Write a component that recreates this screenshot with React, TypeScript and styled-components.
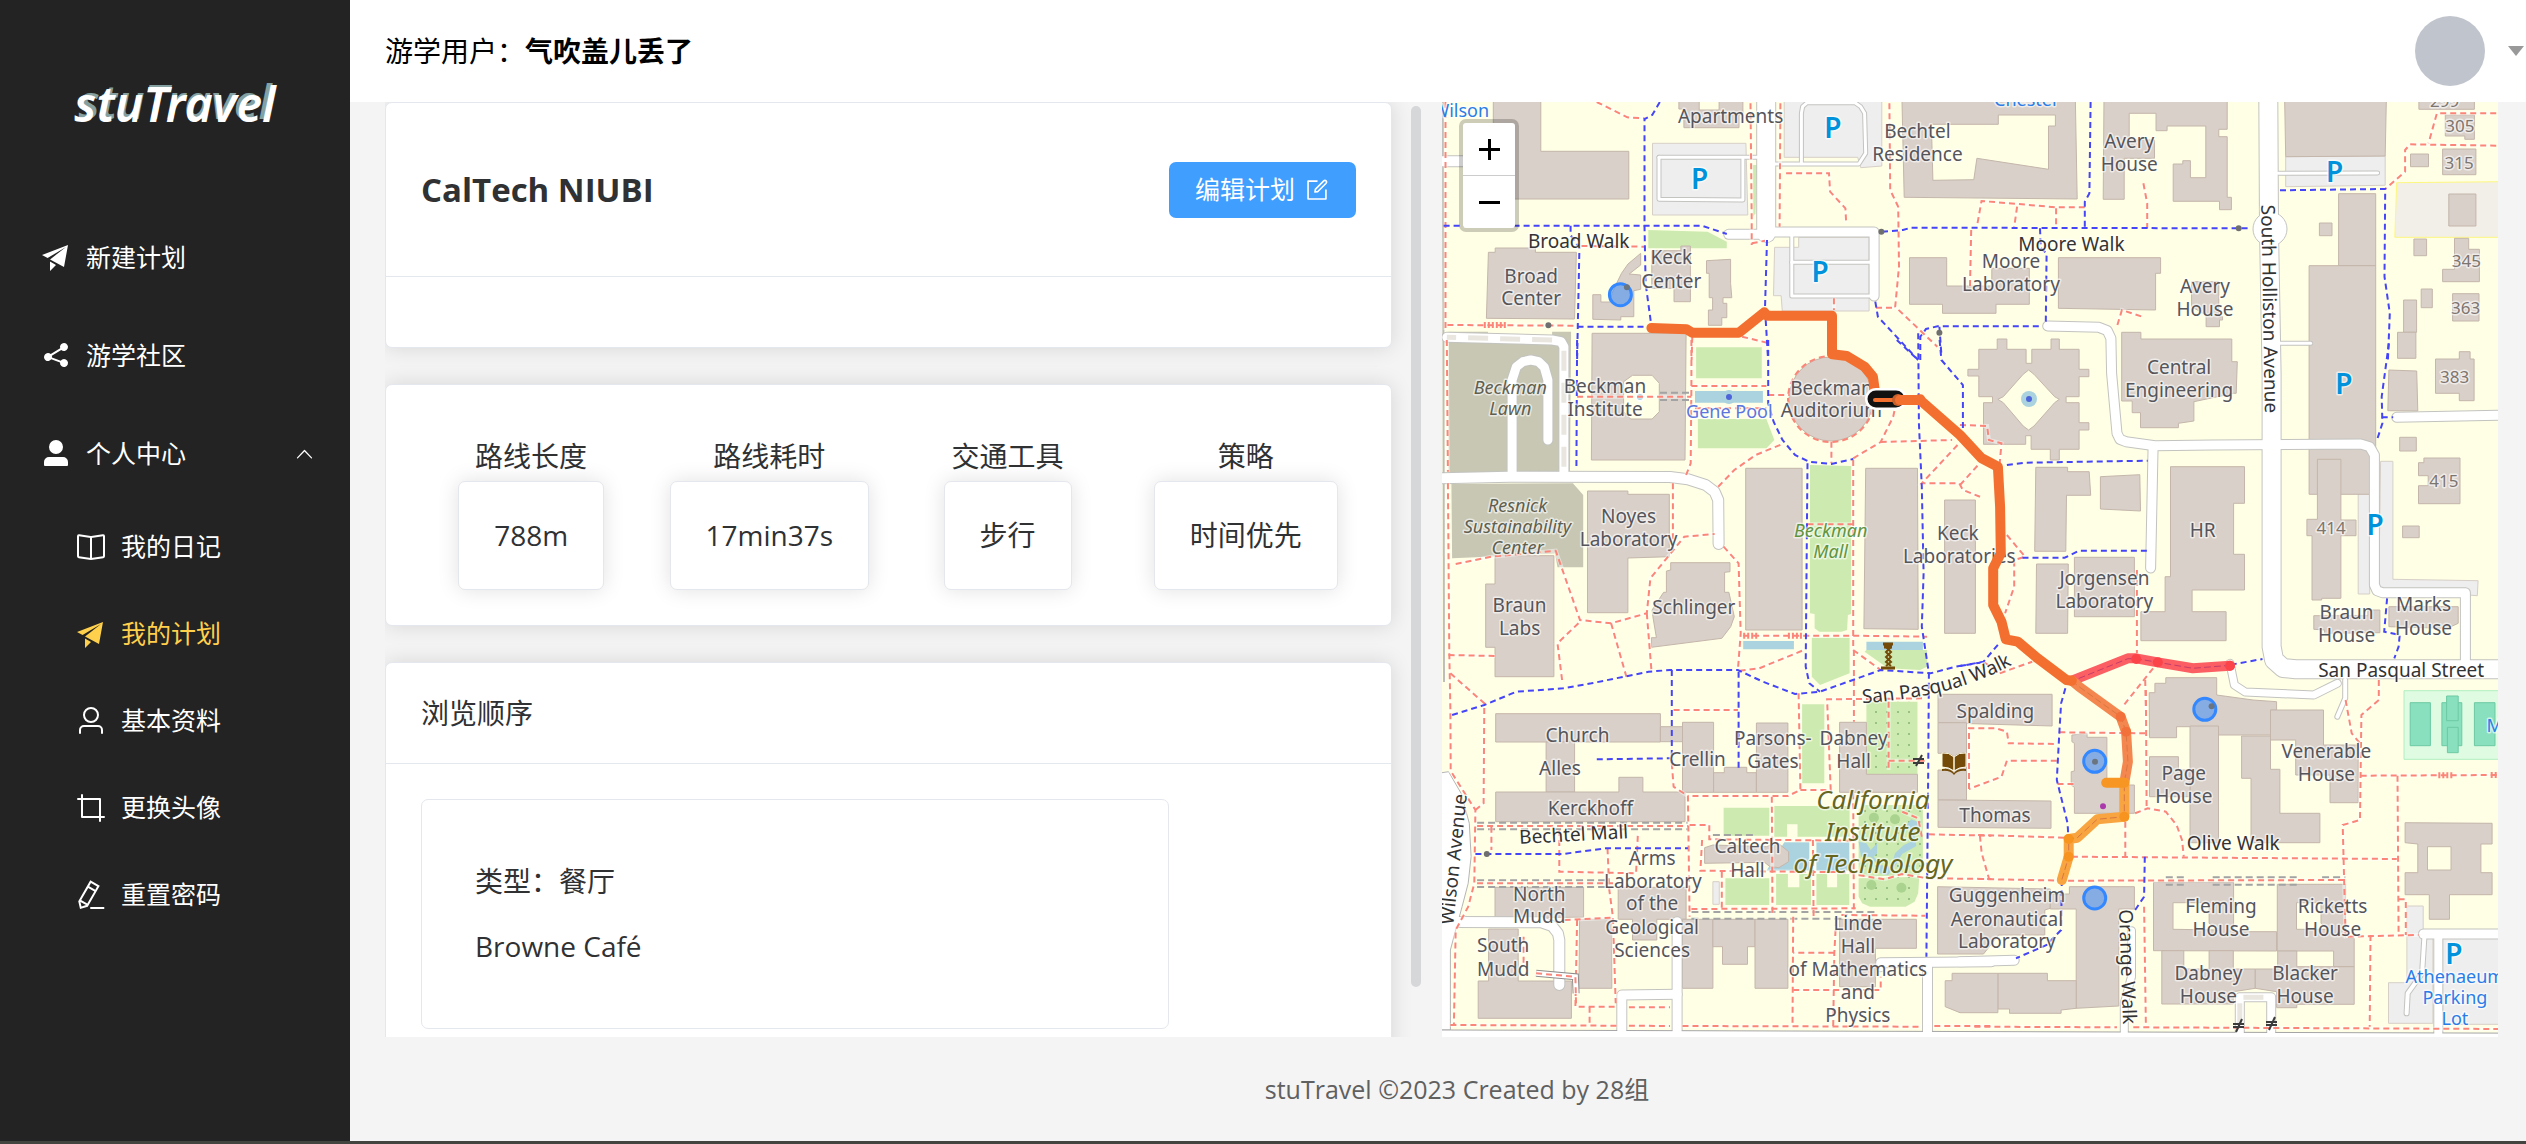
import React, { useState } from "react";
import styled, { createGlobalStyle, css } from "styled-components";

const GlobalStyle = createGlobalStyle`
  *, *::before, *::after { box-sizing: border-box; }
  body {
    margin: 0;
    background: #f4f4f4;
    color: #303133;
    font-family: "Open Sans", "Noto Sans", "Noto Sans CJK SC", sans-serif;
    font-size: 28px;
    line-height: 37px;
  }
  h1, h2, p { margin: 0; }
  a { color: inherit; text-decoration: none; }
  button { font: inherit; cursor: pointer; }
`;

/* ---------- icons ---------- */

const ICONS = {
  promotion: [
    "m64 448 832-320-128 704-446.08-243.328L832 192 242.816 545.536 64 448zm256 512V657.024L512 768 320 960z",
  ],
  share: [
    "m679.872 348.8-301.76 188.608a127.808 127.808 0 0 1 5.12 52.16l279.936 104.96a128 128 0 1 1-22.464 59.904l-279.872-104.96a128 128 0 1 1-16.64-166.272l301.696-188.608a128 128 0 1 1 33.92 54.272z",
  ],
  userFilled: [
    "M288 320a224 224 0 1 0 448 0 224 224 0 1 0-448 0zm544 608H160a32 32 0 0 1-32-32v-96a160 160 0 0 1 160-160h448a160 160 0 0 1 160 160v96a32 32 0 0 1-32 32z",
  ],
  arrowUp: [
    "m488.832 344.32-339.84 356.672a32 32 0 0 0 0 44.16l.384.384a29.44 29.44 0 0 0 42.688 0l320-335.872 319.872 335.872a29.44 29.44 0 0 0 42.688 0l.384-.384a32 32 0 0 0 0-44.16L535.168 344.32a32 32 0 0 0-46.336 0z",
  ],
  reading: [
    "m512 863.36 384-54.848v-638.72L525.568 222.72a96 96 0 0 1-27.136 0L128 169.792v638.72l384 54.848zM137.024 106.432l370.432 52.928a32 32 0 0 0 9.088 0l370.432-52.928A64 64 0 0 1 960 169.792v638.72a64 64 0 0 1-54.976 63.36l-388.48 55.488a32 32 0 0 1-9.088 0l-388.48-55.488A64 64 0 0 1 64 808.512v-638.72a64 64 0 0 1 73.024-63.36z",
    "M480 192h64v704h-64z",
  ],
  user: [
    "M512 512a192 192 0 1 0 0-384 192 192 0 0 0 0 384zm0 64a256 256 0 1 1 0-512 256 256 0 0 1 0 512zm320 320v-96a96 96 0 0 0-96-96H288a96 96 0 0 0-96 96v96a32 32 0 1 1-64 0v-96a160 160 0 0 1 160-160h448a160 160 0 0 1 160 160v96a32 32 0 1 1-64 0z",
  ],
  crop: [
    "M256 768h672a32 32 0 1 1 0 64H224a32 32 0 0 1-32-32V96a32 32 0 0 1 64 0v672z",
    "M832 224v704a32 32 0 1 1-64 0V256H96a32 32 0 0 1 0-64h704a32 32 0 0 1 32 32z",
  ],
  editPen: [
    "m199.04 672.64 193.984 112 224-387.968-193.92-112-224 388.032zm-23.872 60.16 32.896 148.288 144.896-45.696L175.168 732.8zM455.04 229.248l193.92 112 56.704-98.112-193.984-112-56.64 98.112zM104.32 708.8l384-665.024 304.768 175.936L409.152 884.8h.064l-248.448 78.336L104.32 708.8zm384 254.272v-64h448v64h-448z",
  ],
  edit: [
    "M832 512a32 32 0 1 1 64 0v352a32 32 0 0 1-32 32H160a32 32 0 0 1-32-32V160a32 32 0 0 1 32-32h352a32 32 0 0 1 0 64H192v640h640V512z",
    "m469.952 554.24 52.8-7.552L847.104 222.4a32 32 0 1 0-45.248-45.248L477.44 501.44l-7.552 52.8zm422.4-422.4a96 96 0 0 1 0 135.808l-331.84 331.84a32 32 0 0 1-18.112 9.088L436.8 623.68a32 32 0 0 1-36.224-36.224l15.104-105.6a32 32 0 0 1 9.024-18.112l331.904-331.84a96 96 0 0 1 135.744 0z",
  ],
};
type IconName = keyof typeof ICONS;

const IconSvg = styled.svg<{ $size: number }>`
  flex: none;
  width: ${(p) => p.$size}px;
  height: ${(p) => p.$size}px;
  fill: currentColor;
`;

function Icon({ name, size = 32 }: { name: IconName; size?: number }) {
  return (
    <IconSvg $size={size} viewBox="0 0 1024 1024" aria-hidden="true">
      {ICONS[name].map((d) => (
        <path key={d} d={d} />
      ))}
    </IconSvg>
  );
}

/* ---------- page frame ---------- */

const Shell = styled.div`
  display: grid;
  grid-template-columns: 350px minmax(0, 1fr);
  height: 100vh;
  border-bottom: 3px solid #43443f;
`;

const Sidebar = styled.aside`
  display: flex;
  flex-direction: column;
  background: #232323;
  color: #fff;
`;

const LogoBar = styled.div`
  display: flex;
  justify-content: center;
  align-items: center;
  height: 208px;
  padding-right: 0;
`;

const Logo = styled.h1`
  position: relative;
  font-family: "Noto Sans", "Open Sans", sans-serif;
  font-size: 48px;
  line-height: 64px;
  font-style: italic;
  font-weight: 600;
  color: #fff;
  z-index: 0;
  &::before {
    content: "stuTravel";
    position: absolute;
    inset: -3px 0 auto;
    text-align: center;
    font-size: 46px;
    color: #84a0a0;
    z-index: -1;
  }
`;

const MenuList = styled.ul<{ $nested?: boolean }>`
  list-style: none;
  margin: 0;
  padding: ${(p) => (p.$nested ? 1 : 0)}px 0 0;
`;

const menuRow = css`
  display: flex;
  align-items: center;
  width: 100%;
  border: 0;
  background: none;
  color: #fff;
  font-size: 25px;
  gap: 14px;
`;

const MenuLink = styled.a<{ $sub?: boolean; $active?: boolean }>`
  ${menuRow}
  height: ${(p) => (p.$sub ? 87 : 98)}px;
  padding: 0 35px 0 ${(p) => (p.$sub ? 75 : 40)}px;
  ${(p) => p.$active && "color: #ffd04b;"}
`;

const MenuToggle = styled.button`
  ${menuRow}
  height: 98px;
  padding: 0 35px 0 40px;
`;

const MenuText = styled.span`
  flex: 1;
  text-align: left;
`;

const Flip = styled.span<{ $open: boolean }>`
  display: flex;
  transform: rotate(${(p) => (p.$open ? 0 : 180)}deg);
`;

const Main = styled.div`
  display: flex;
  flex-direction: column;
  min-width: 0;
  min-height: 0;
`;

const Header = styled.header`
  display: flex;
  align-items: center;
  justify-content: space-between;
  flex: none;
  height: 102px;
  padding: 0 2px 0 35px;
  background: #fff;
  color: #000;
`;

const UserMenu = styled.button`
  display: flex;
  align-items: center;
  gap: 23px;
  padding: 0;
  border: 0;
  background: none;
`;

const Avatar = styled.span`
  width: 70px;
  height: 70px;
  border-radius: 50%;
  background: #c0c4cc;
`;

const Caret = styled.span`
  border: 8px solid transparent;
  border-top: 10px solid #999;
  border-bottom: 0;
`;

const Workspace = styled.main`
  display: grid;
  grid-template-columns: minmax(0, 1040fr) minmax(0, 1056fr);
  gap: 17px;
  flex: 1;
  min-height: 0;
  padding: 0 28px 0 35px;
`;

const Footer = styled.footer`
  display: flex;
  align-items: center;
  justify-content: center;
  flex: none;
  height: 104px;
  padding-left: 38px;
  color: #606060;
  font-size: 25px;
`;

/* ---------- plan column ---------- */

const ScrollArea = styled.section`
  position: relative;
  overflow: hidden;
`;

const CardStack = styled.div`
  display: flex;
  flex-direction: column;
  gap: 36px;
  height: 100%;
  padding-right: 33px;
`;

const Thumb = styled.span`
  position: absolute;
  top: 4px;
  right: 4px;
  bottom: 50px;
  width: 10px;
  border-radius: 5px;
  background: #d6d7d9;
`;

const Card = styled.article<{ $flat?: boolean }>`
  flex: none;
  border: 1px solid #e4e7ed;
  border-radius: 7px;
  background: #fff;
  ${(p) => !p.$flat && "box-shadow: 0 0 21px rgba(0, 0, 0, 0.12);"}
`;

const CardHeader = styled.div<{ $tall?: boolean }>`
  display: flex;
  align-items: center;
  justify-content: space-between;
  height: ${(p) => (p.$tall ? 174 : 101)}px;
  padding: 0 35px;
  border-bottom: 1px solid #e4e7ed;
`;

const CardBody = styled.div`
  padding: 35px;
`;

const PlanTitle = styled.h2`
  font-size: 33px;
  line-height: 44px;
  font-weight: 700;
`;

const EditButton = styled.button`
  display: flex;
  align-items: center;
  gap: 9px;
  height: 56px;
  padding: 0 26px;
  border: 0;
  border-radius: 7px;
  background: #409eff;
  color: #fff;
  font-size: 25px;
`;

const Stats = styled.dl`
  display: grid;
  grid-template-columns: repeat(4, 1fr);
  margin: 0 -9px;
`;

const Stat = styled.div`
  display: flex;
  flex-direction: column;
  align-items: center;
  padding-top: 12px;
`;

const StatLabel = styled.dt`
  line-height: 49px;
`;

const StatValue = styled(Card)`
  margin: 0;
  padding: 35px;
`;

const Stop = styled(Card)`
  display: flex;
  flex-direction: column;
  gap: 28px;
  width: 80%;
  padding: 63px 53px;
`;

/* ---------- campus map ---------- */

const SHEETS = {
  NW: { x: -52, y: -102, kx: 2.613, ky: 3 },
  NE: { x: 484, y: -102, kx: 2.613, ky: 3 },
  W: { x: -22, y: 238, kx: 2.8, ky: 3 },
  E: { x: 518, y: 238, kx: 2.77, ky: 3 },
  SW: { x: -22, y: 588, kx: 2.8, ky: 3 },
  SE: { x: 518, y: 588, kx: 2.77, ky: 3 },
};
type SheetId = keyof typeof SHEETS;
type Shape = [SheetId, string];
type Line = [SheetId, string, number];
type Label = [SheetId, number, number, string];

function at(sheet: SheetId, x: number, y: number): [number, number] {
  const s = SHEETS[sheet];
  return [Math.round((s.x + x / s.kx) * 10) / 10, Math.round((s.y + y / s.ky) * 10) / 10];
}

function project(sheet: SheetId, coords: string) {
  return coords
    .split(" ")
    .map((pair) => {
      const [x, y] = pair.split(",").map(Number);
      return at(sheet, x, y).join(",");
    })
    .join(" ");
}

const PARKING: Shape[] = [
  ["NW", "686,430 930,430 935,645 686,645"],
  ["NW", "1030,300 1285,300 1285,498 1230,503 1222,472 1030,472"],
  ["NW", "1005,742 1068,742 1068,712 1252,712 1252,933 1025,933 1022,887 1002,887"],
  ["NE", "940,470 1200,468 1200,556 940,560"],
  ["E", "1103,390 1135,390 1135,762 1103,762"],
  ["E", "1165,364 1199,364 1199,718 1435,722 1433,767 1160,745"],
  ["SE", "1238,648 1283,648 1283,735 1310,735 1310,1000 1187,1000 1187,878 1238,878"],
  ["SE", "1337,745 1500,745 1500,1003 1337,1003"],
  ["SW", "820,575 838,575 838,643 820,643"],
];

const BARE_GROUND: Shape[] = [
  ["W", "80,-25 190,-25 190,-10 370,-10 370,-25 423,-25 420,395 80,400"],
  ["W", "88,432 428,430 457,465 457,682 385,682 378,640 190,650 90,655"],
];

const LAWNS: Shape[] = [
  ["NW", "675,690 830,695 880,725 880,745 675,745"],
  ["NW", "948,495 960,495 955,640 948,650"],
  ["W", "773,22 957,22 957,115 773,115"],
  ["W", "778,237 970,237 992,300 970,325 778,325"],
  ["W", "1092,375 1208,378 1208,822 1198,825 1196,870 1180,875 1118,875 1105,865 1105,822 1092,820"],
  ["W", "1097,893 1203,893 1203,1000 1120,1035 1097,1010"],
  ["W", "1245,935 1250,930 1420,930 1420,980 1400,990 1310,985"],
  ["SW", "1070,43 1132,43 1132,280 1070,280"],
  ["SW", "850,353 978,353 978,437 850,437"],
  ["SW", "992,348 1203,348 1203,440 1057,440 1057,403 1028,403 1028,440 992,440"],
  ["SW", "855,565 978,565 978,645 855,645"],
  ["SW", "997,552 1030,552 1030,592 1062,592 1062,552 1095,552 1095,645 997,645"],
  ["SW", "1110,552 1140,552 1140,592 1168,592 1168,552 1202,552 1202,645 1110,645"],
];

const GARDENS: Shape[] = [
  ["SW", "1250,35 1393,35 1393,253 1250,253"],
  ["SW", "1240,345 1395,345 1408,360 1408,530 1398,555 1228,560 1228,360"],
  ["SW", "1228,565 1398,560 1395,610 1385,635 1360,650 1260,650 1238,640 1228,620"],
];

const WATER: Shape[] = [
  ["W", "770,153 960,153 960,188 770,188"],
  ["W", "905,903 1047,903 1047,928 905,928"],
  ["W", "1250,905 1408,905 1408,930 1250,930"],
  ["SW", "1020,457 1090,457 1090,542 970,542"],
  ["SW", "1110,457 1202,457 1202,542 1110,542"],
  ["SW", "1228,455 1250,460 1262,480 1280,460 1280,490 1270,500 1290,525 1320,530 1330,490 1355,465 1375,455 1378,425 1362,405 1375,388 1393,395 1393,415 1383,430 1390,468 1350,492 1332,525 1310,556 1288,550 1285,530 1262,500 1235,500"],
];

const BUILDINGS: Shape[] = [
  ["NW", "270,290 394,290 394,454 624,454 624,597 270,597"],
  ["NW", "755,290 808,290 808,330 860,330 860,290 922,290 922,340 912,345 912,383 768,383 768,327 755,327"],
  ["NE", "-63,290 390,290 395,597 -57,592"],
  ["NW", "257,757 275,757 275,744 380,744 380,757 487,757 482,957 252,955"],
  ["NW", "530,884 551,884 551,906 575,906 580,880 592,850 605,820 622,792 655,760 655,795 625,822 655,825 655,868 637,872 637,950 603,950 603,960 530,958"],
  ["NW", "684,752 760,752 760,738 785,738 785,905 742,905 742,865 684,865"],
  ["NW", "827,782 890,778 890,850 893,893 870,893 870,910 880,910 880,953 867,953 867,976 832,976 832,930 843,930 843,893 834,893 834,820 827,820"],
  ["W", "482,-20 745,-20 742,360 480,360"],
  ["NE", "-43,773 54,773 54,858 172,858 172,805 270,805 270,913 183,913 183,940 43,940 43,913 -43,913"],
  ["NE", "346,773 613,773 613,820 600,820 600,930 346,925"],
  ["NE", "465,290 787,290 787,388 765,388 765,410 787,410 787,592 798,592 798,629 767,629 767,604 646,604 646,492 671,492 671,482 691,482 691,533 731,533 731,378 630,378 630,392 601,392 601,340 531,340 531,420 597,420 597,475 518,475 518,598 463,598"],
  ["NE", "937,290 1203,290 1200,468 940,470"],
  ["NE", "1288,290 1433,290 1433,328 1288,328"],
  ["NE", "1357,345 1433,345 1433,418 1408,418 1408,408 1357,408"],
  ["NE", "1266,462 1313,462 1313,500 1266,500"],
  ["NE", "1350,447 1437,447 1437,524 1350,524"],
  ["NE", "1366,582 1437,582 1437,678 1366,678"],
  ["NE", "1275,717 1308,717 1308,767 1275,767"],
  ["NE", "1381,715 1418,715 1418,748 1446,748 1446,845 1350,845 1350,808 1381,808"],
  ["NE", "1028,669 1061,669 1061,707 1028,707"],
  ["NE", "1078,581 1175,581 1175,797 1078,797"],
  ["NE", "1001,797 1175,797 1175,1483 1001,1483"],
  ["NE", "1294,867 1323,867 1323,923 1294,923"],
  ["NE", "1376,881 1445,881 1445,963 1376,963"],
  ["NE", "1248,900 1282,900 1282,997 1248,997"],
  ["NE", "1232,997 1280,997 1280,1075 1232,1075"],
  ["NE", "694,845 765,845 765,950 775,950 775,960 767,960 767,980 732,980 732,945 694,920"],
  ["E", "1188,90 1265,93 1268,213 1185,212"],
  ["E", "1383,35 1413,35 1413,57 1424,57 1424,182 1383,182 1383,160 1317,160 1317,57 1383,57"],
  ["E", "448,-23 501,-23 501,-3 753,-3 753,65 768,65 765,160 758,160 648,185 648,243 605,250 605,263 500,263 500,218 477,218 477,183 448,183"],
  ["E", "52,28 103,28 103,-3 130,-3 130,28 183,28 183,70 199,70 199,28 252,28 252,-3 275,-3 275,28 330,28 330,88 357,88 357,110 330,110 330,170 294,170 294,188 330,188 330,248 357,248 357,270 330,270 330,328 275,328 275,360 250,360 250,328 197,328 197,287 182,287 182,313 65,313 65,188 90,188 90,170 52,170 52,108 22,108 22,88 52,88"],
  ["E", "210,382 298,382 298,395 358,395 362,466 295,466 293,634 207,634"],
  ["E", "389,410 498,404 500,513 389,507"],
  ["E", "583,380 788,380 788,490 758,490 758,643 788,643 788,750 643,750 643,815 737,815 737,902 501,902 501,815 568,815 568,710 583,710"],
  ["E", "317,652 483,652 483,830 317,830"],
  ["E", "212,672 300,672 298,880 210,880"],
  ["E", "990,358 1055,358 1055,540 1097,540 1097,587 1055,587 1055,775 1002,775 1002,780 975,780 975,587 961,587 961,538 990,538"],
  ["E", "1218,292 1264,292 1264,333 1218,333"],
  ["E", "1285,354 1385,354 1385,491 1270,491 1270,437 1297,437 1297,407 1270,407 1270,368 1285,368"],
  ["E", "1226,558 1272,558 1272,593 1226,593"],
  ["E", "980,827 1130,827 1130,810 1163,810 1163,878 1010,880 1010,870 980,868"],
  ["E", "1188,800 1380,800 1380,850 1350,865 1188,860"],
  ["SE", "524,8 540,8 540,-20 570,-20 570,-37 711,-37 711,15 812,30 877,35 877,60 860,60 860,135 716,135 716,110 600,110 600,143 525,143"],
  ["SE", "860,60 1007,60 1007,165 1103,165 1103,338 1025,338 1025,255 930,255 930,150 860,150"],
  ["SE", "637,108 716,108 716,458 637,458"],
  ["SE", "780,138 860,138 860,238 886,238 886,370 997,370 997,458 806,458 806,265 780,265"],
  ["SE", "525,200 605,200 605,240 637,240 637,320 525,320"],
  ["SE", "310,135 352,130 352,142 407,142 407,285 483,285 483,370 317,370 317,292 308,285 308,245 317,243 317,160 310,155"],
  ["SE", "-61,13 255,13 255,108 -61,98"],
  ["SE", "-61,98 18,98 18,330 -61,330 -61,240 -40,240 -40,190 -61,190"],
  ["SE", "-61,330 252,333 252,415 -61,412"],
  ["SE", "-62,590 250,597 250,655 235,660 235,735 107,735 65,792 -62,792"],
  ["SE", "303,590 483,590 483,657 440,657 440,948 322,955 322,657 250,657 250,612 303,612"],
  ["SE", "105,850 242,850 242,872 322,872 322,955 280,960 280,970 137,970 137,957 105,957"],
  ["SE", "-41,872 -22,872 -22,850 105,850 105,968 0,968 -41,950"],
  ["SE", "1233,398 1474,400 1474,462 1443,462 1443,548 1474,548 1474,614 1356,614 1356,688 1300,688 1300,614 1233,614 1233,548 1268,548 1268,462 1233,458"],
  ["SE", "536,577 758,577 758,725 877,725 877,783 536,782"],
  ["SE", "879,583 1068,583 1068,745 1092,745 1092,830 1035,830 1035,783 879,783"],
  ["SE", "559,782 620,782 620,837 690,837 690,782 757,782 757,837 818,837 818,895 757,905 757,942 559,942"],
  ["SE", "818,837 880,837 880,783 933,783 933,830 1092,830 1092,943 933,943 933,953 877,953 877,905 818,895"],
  ["W", "210,647 375,647 375,1010 210,1010 210,922 184,922 184,732 210,732"],
  ["W", "469,453 582,453 582,463 698,463 698,650 582,654 582,818 469,818"],
  ["W", "702,668 868,668 868,695 853,697 853,757 865,757 880,830 870,860 845,895 648,922 648,893 662,893 652,830 650,810 682,757 690,757 690,693 702,690"],
  ["W", "912,385 1070,385 1070,870 912,870"],
  ["W", "1248,385 1393,385 1395,868 1243,866"],
  ["W", "1469,480 1555,480 1555,880 1469,880"],
  ["SW", "212,71 673,71 673,156 212,156"],
  ["SW", "673,110 735,110 735,155 673,155"],
  ["SW", "735,97 822,97 822,307 735,307"],
  ["SW", "822,248 852,248 852,232 915,232 915,248 942,248 942,307 822,307"],
  ["SW", "942,99 1030,99 1030,307 942,307"],
  ["SW", "353,156 433,156 433,306 353,306"],
  ["SW", "212,306 557,306 557,262 624,262 624,306 742,306 742,395 212,395"],
  ["SW", "1175,97 1250,97 1250,253 1393,253 1393,307 1175,307"],
  ["SW", "797,473 820,465 970,470 1000,457 1032,485 1032,515 1005,533 980,530 965,517 797,520"],
  ["SW", "210,592 458,592 458,682 210,682"],
  ["SW", "555,592 745,592 745,688 663,688 663,750 595,750 595,688 555,688"],
  ["SW", "447,688 537,688 537,895 445,895"],
  ["SW", "735,688 820,688 820,895 735,895"],
  ["SW", "820,688 938,688 938,770 917,770 917,823 847,823 847,770 820,770"],
  ["SW", "938,688 1030,688 1030,895 938,895"],
  ["SW", "1175,688 1390,688 1390,775 1275,775 1275,890 1175,890"],
  ["SW", "192,717 275,717 275,873 424,873 424,985 163,985 163,873 192,873"],
];

const COURTS: Shape[] = [
  ["NE", "14,373 189,373 189,345 338,345 338,378 320,378 320,508 133,475 125,539 18,541"],
  ["W", "570,125 595,106 650,106 670,130 670,215 650,237 590,237 570,215"],
  ["E", "190,90 205,103 262,170 275,178 262,188 205,258 190,270 175,258 120,188 105,178 120,170 175,103"],
  ["SE", "1295,470 1360,470 1360,540 1295,540"],
  ["SE", "590,638 690,638 690,700 720,720 590,718"],
  ["SE", "932,638 1000,638 1000,700 1020,718 932,718"],
];

const PITCHES: Shape[] = [
  ["SE", "1247,38 1303,38 1303,167 1247,167"],
  ["SE", "1335,38 1390,38 1390,167 1335,167"],
  ["SE", "1348,18 1380,18 1380,92 1348,92"],
  ["SE", "1350,112 1380,112 1380,188 1350,188"],
  ["SE", "1425,38 1482,38 1482,167 1425,167"],
];

const ROADS: Line[] = [
  ["NW", "703,472 962,472", 3],
  ["NW", "703,472 703,598 922,600 922,475", 3],
  ["NW", "1005,492 1225,492 1243,460 1240,340 1230,320 1215,308 1090,308 1078,320 1075,340 1075,492", 3],
  ["NW", "1265,888 1050,888 1050,700", 3],
  ["NW", "1050,787 1265,787", 3],
  ["NE", "920,520 1180,519", 3],
  ["NE", "925,1030 1005,1030", 3],
  ["NW", "983,280 983,700", 18],
  ["NW", "885,703 983,703", 9],
  ["NW", "983,696 1265,696 1265,888", 9],
  ["NW", "110,484 200,484", 10],
  ["W", "258,400 258,120 270,80 288,65 310,60 332,65 348,82 358,120 358,300", 9],
  ["W", "403,400 403,20 395,5 370,0 75,-8", 9],
  ["W", "50,415 250,410 700,411 750,418 800,435 825,455 835,480 836,612", 10],
  ["E", "528,684 535,318", 9],
  ["E", "243,-42 385,-38 408,-28 418,-5 420,100 435,280 443,298 460,305 540,317 700,315 1110,312 1135,320 1148,345 1148,735 1155,752 1170,758 1400,758 1400,980", 9],
  ["E", "1210,232 1510,225", 9],
  ["E", "748,970 760,1035 790,1056 980,1065 1045,1030", 7],
  ["SE", "1067,-30 1067,25 1045,80", 4],
  ["E", "854,-730 856,-330 863,100 863,920 870,960 895,984 930,988 1500,988", 18],
  ["SW", "95,696 340,697 370,708 386,730 390,750 390,885", 10],
  ["SW", "565,1040 565,915 720,913", 9],
  ["SW", "720,695 720,1040", 9],
  ["SW", "1290,830 1290,818 1600,815", 9],
  ["SE", "0,815 150,811", 9],
  ["SW", "1421,825 1421,1040", 9],
  ["SE", "475,722 475,860 455,940 455,1040", 7],
  ["SE", "775,1030 775,922 862,922 862,1030", 8],
  ["SE", "1325,735 1325,1035", 8],
  ["SE", "1284,732 1510,732", 9],
  ["SE", "1286,745 1280,850 1240,910 1237,970", 4],
];

const BLUE_PATHS: Shape[] = [
  ["NW", "140,677 815,677 880,702"],
  ["NW", "705,306 685,345 665,357 665,677 668,850 682,970"],
  ["NW", "472,677 472,705 495,745 493,850 490,1020 489,1080"],
  ["NW", "490,980 680,980"],
  ["NW", "985,720 980,925 988,1080"],
  ["NW", "1268,905 1275,950 1380,1080"],
  ["NE", "-115,695 -60,690 -40,683 850,685"],
  ["NE", "430,306 427,580 415,605 415,685"],
  ["NE", "298,685 300,745 315,760 313,965"],
  ["NE", "-15,1080 -15,1010 0,987 30,979 300,979"],
  ["NE", "35,980 40,1060"],
  ["NE", "925,571 1200,567 1198,830 1212,940 1207,1080"],
  ["W", "440,0 438,385"],
  ["W", "975,0 975,190 990,245 1015,300 1050,345 1090,365 1152,372 1213,357"],
  ["W", "1395,-20 1397,250 1405,440 1410,700 1405,860 1425,1000 1423,1300 1418,1850"],
  ["W", "1335,0 1395,60"],
  ["W", "1455,0 1460,60 1520,135 1520,265"],
  ["W", "1085,370 1080,980 1090,1030 1120,1055"],
  ["SW", "90,75 180,45 270,5 400,-5 480,-20 640,-55 700,-60 890,-60 960,-25 1050,12 1120,5 1290,-60 1430,-50 1500,-70 1568,-82"],
  ["E", "0,978 65,965 110,908"],
  ["SW", "705,-60 705,220"],
  ["SW", "892,-55 892,235"],
  ["SW", "495,208 700,205"],
  ["SW", "155,492 400,492 520,475 750,475"],
  ["E", "130,375 180,368 520,362"],
  ["E", "173,653 290,653 330,632 520,632"],
  ["E", "1188,10 1168,170 1170,250 1155,300"],
  ["E", "1168,232 1200,232"],
  ["E", "1183,775 1175,875 1218,885 1215,920 1203,955"],
  ["E", "750,974 838,957"],
  ["SE", "292,-5 280,40 275,130 268,270 298,400 300,440"],
  ["SE", "282,570 280,720 240,765 155,805"],
  ["SE", "512,500 510,620 480,668"],
];

const RED_PATHS: Shape[] = [
  ["NW", "145,306 145,990"],
  ["NW", "942,310 945,660 945,735"],
  ["NW", "1020,310 1018,680"],
  ["NW", "1305,310 1307,570 1328,620 1330,800 1320,920 1430,1040"],
  ["NW", "1270,923 1320,923"],
  ["NW", "1035,520 1147,520 1150,575 1190,625 1192,670"],
  ["NW", "540,306 620,352 665,355"],
  ["NW", "150,975 490,977"],
  ["NW", "500,738 665,740"],
  ["NW", "945,730 980,722"],
  ["NW", "1160,895 1160,930"],
  ["NW", "790,1010 788,1080"],
  ["NW", "920,1010 985,1028"],
  ["NE", "415,622 340,622 240,612 145,603 133,680"],
  ["NE", "118,690 115,860"],
  ["NE", "238,620 230,685"],
  ["NE", "340,625 340,685"],
  ["NE", "568,550 578,610 578,685"],
  ["NE", "500,975 512,930 565,950"],
  ["NE", "1490,340 1335,340 1313,430"],
  ["NE", "1490,437 1265,433 1252,450 1252,515 1200,567"],
  ["W", "75,0 78,395"],
  ["W", "78,430 82,940 85,1110 86,1300"],
  ["W", "100,672 200,650 380,632 448,840 535,850 635,820 645,715 740,590 825,582"],
  ["W", "398,1020 385,910 448,845"],
  ["W", "535,850 578,1010"],
  ["W", "635,820 648,990"],
  ["W", "708,430 708,640"],
  ["W", "440,170 760,170"],
  ["W", "760,0 760,140 758,370 745,405"],
  ["W", "760,138 970,138"],
  ["W", "770,205 970,205"],
  ["W", "975,165 1035,165"],
  ["W", "835,440 880,390 940,345 1015,312"],
  ["W", "850,620 892,670 898,880 890,990"],
  ["W", "905,887 1220,887 1420,890"],
  ["W", "1213,360 1213,930 1290,990"],
  ["W", "1213,355 1290,306 1325,230 1335,180"],
  ["W", "1290,306 1490,300"],
  ["W", "1152,305 1152,370"],
  ["W", "1505,315 1405,430 1510,430 1520,450 1568,470"],
  ["W", "895,992 950,985 1075,930"],
  ["W", "1085,553 1215,553"],
  ["W", "80,945 210,948"],
  ["W", "85,1000 180,1090 178,1390 155,1410"],
  ["SW", "1060,10 1065,300 1030,318 755,318"],
  ["SW", "1065,300 1150,300 1140,28 1410,25"],
  ["SW", "1215,-120 1215,95"],
  ["SW", "1312,35 1312,240"],
  ["SW", "1312,212 1420,212"],
  ["SW", "710,60 890,60"],
  ["SW", "705,220 710,290 750,318 755,680"],
  ["SW", "160,408 750,408"],
  ["SW", "160,580 555,580"],
  ["SW", "90,250 155,360 152,580 135,650 100,720 95,1005"],
  ["SW", "85,1005 550,1007"],
  ["SW", "585,1007 700,1008"],
  ["SW", "735,1008 1405,1010"],
  ["SW", "1440,1008 1600,1008"],
  ["SE", "40,1010 435,1012"],
  ["SE", "480,1012 1500,1017"],
  ["SW", "755,405 810,405 810,448 1215,452"],
  ["SW", "790,450 785,542 1215,547"],
  ["SW", "985,320 987,680"],
  ["SW", "1213,310 1215,670"],
  ["SW", "760,657 1220,655"],
  ["SW", "1180,675 1415,677"],
  ["SW", "1100,450 1102,680"],
  ["SW", "845,545 845,655"],
  ["SW", "1045,680 1043,1010"],
  ["SW", "1165,690 1160,790 1157,1010"],
  ["SW", "1160,788 1045,788"],
  ["SW", "1045,900 1290,900 1290,860"],
  ["SW", "440,690 435,950 545,950"],
  ["SW", "525,475 530,600 540,680 548,940"],
  ["SW", "475,950 475,1000"],
  ["SW", "585,952 700,952"],
  ["SW", "405,690 540,683"],
  ["SW", "390,420 390,545 605,550 610,430"],
  ["SW", "200,410 200,480"],
  ["SW", "290,740 290,830"],
  ["SW", "1425,433 1600,437"],
  ["SW", "1228,555 1300,568 1350,552 1420,565 1600,567"],
  ["SW", "1405,440 1395,385 1350,365"],
  ["SE", "50,435 295,443"],
  ["SE", "310,500 1210,507"],
  ["SE", "50,567 300,572 1068,570"],
  ["SE", "55,437 60,490 80,565"],
  ["SE", "25,297 25,115 100,115 130,125 135,160 268,162"],
  ["SE", "268,212 130,212 115,260 25,297"],
  ["SE", "275,127 515,130"],
  ["SE", "270,282 315,282"],
  ["SE", "515,0 517,350"],
  ["SE", "485,370 520,355 570,365 600,405 615,450 620,500"],
  ["SE", "458,395 458,500"],
  ["SE", "1160,-30 1160,30 1112,75 1108,390 1060,405 1068,740 1270,735"],
  ["SE", "1110,257 1490,255"],
  ["SE", "1212,257 1215,735"],
  ["SE", "1215,628 1235,628 1235,735"],
  ["SE", "1137,735 1135,1010"],
  ["SE", "510,650 515,1010"],
  ["SE", "1068,30 1085,130 1108,160"],
  ["E", "490,690 490,940"],
  ["E", "130,585 180,650 150,660 150,740 125,820"],
  ["E", "0,255 75,258 80,300 115,310 110,370"],
  ["E", "0,435 50,375"],
  ["E", "535,985 450,1100"],
  ["E", "513,1020 515,1110"],
  ["E", "65,965 110,1000 200,965"],
];

const TUNNELS: Shape[] = [
  ["SW", "160,398 750,398"],
  ["SW", "160,418 750,418"],
  ["SW", "160,571 520,571"],
  ["SW", "160,591 520,591"],
  ["SW", "760,666 1275,666"],
  ["SW", "760,686 1180,686"],
  ["W", "672,158 758,158"],
  ["W", "672,180 758,180"],
  ["SW", "820,435 935,435"],
  ["SE", "570,562 630,562"],
  ["SE", "570,584 630,584"],
  ["SE", "700,562 935,562"],
  ["SE", "700,584 935,584"],
  ["SE", "1003,562 1068,562"],
];

const RAMPS: Shape[] = [
  ["W", "905,887 945,887"],
  ["W", "1030,887 1070,887"],
  ["NW", "245,975 305,975"],
  ["SE", "1325,256 1365,256"],
  ["SE", "1470,255 1490,255"],
];

const PLACE_LABELS: Label[] = [
  ["NW", 890, 348, "Apartments"],
  ["NW", 1378, 392, "Bechtel"],
  ["NW", 1378, 463, "Residence"],
  ["NW", 369, 827, "Broad"],
  ["NW", 369, 895, "Center"],
  ["NW", 735, 772, "Keck"],
  ["NW", 735, 842, "Center"],
  ["NE", 531, 424, "Avery"],
  ["NE", 531, 493, "House"],
  ["NE", 222, 783, "Moore"],
  ["NE", 222, 853, "Laboratory"],
  ["NE", 729, 859, "Avery"],
  ["NE", 729, 928, "House"],
  ["E", 607, 80, "Central"],
  ["E", 607, 150, "Engineering"],
  ["W", 518, 137, "Beckman"],
  ["W", 518, 207, "Institute"],
  ["W", 1152, 143, "Beckman"],
  ["W", 1152, 211, "Auditorium"],
  ["W", 584, 527, "Noyes"],
  ["W", 584, 597, "Laboratory"],
  ["W", 279, 796, "Braun"],
  ["W", 279, 864, "Labs"],
  ["W", 767, 801, "Schlinger"],
  ["W", 1506, 579, "Keck"],
  ["W", 1510, 648, "Laboratories"],
  ["E", 672, 569, "HR"],
  ["E", 400, 715, "Jorgensen"],
  ["E", 400, 784, "Laboratory"],
  ["E", 1071, 816, "Braun"],
  ["E", 1071, 885, "House"],
  ["E", 1284, 793, "Marks"],
  ["E", 1284, 863, "House"],
  ["SW", 441, 136, "Church"],
  ["SW", 392, 233, "Alles"],
  ["SW", 777, 206, "Crellin"],
  ["SW", 988, 143, "Parsons-"],
  ["SW", 988, 212, "Gates"],
  ["SW", 1214, 143, "Dabney"],
  ["SW", 1214, 212, "Hall"],
  ["SW", 477, 353, "Kerckhoff"],
  ["SW", 917, 469, "Caltech"],
  ["SW", 917, 539, "Hall"],
  ["SW", 650, 503, "Arms"],
  ["SW", 652, 574, "Laboratory"],
  ["SW", 650, 640, "of the"],
  ["SW", 650, 710, "Geological"],
  ["SW", 650, 779, "Sciences"],
  ["SW", 334, 611, "North"],
  ["SW", 334, 679, "Mudd"],
  ["SW", 233, 766, "South"],
  ["SW", 233, 836, "Mudd"],
  ["SW", 1226, 700, "Linde"],
  ["SW", 1226, 769, "Hall"],
  ["SW", 1226, 837, "of Mathematics"],
  ["SW", 1226, 907, "and"],
  ["SW", 1226, 976, "Physics"],
  ["SE", 98, 62, "Spalding"],
  ["SE", 97, 375, "Thomas"],
  ["SE", 130, 616, "Guggenheim"],
  ["SE", 130, 686, "Aeronautical"],
  ["SE", 130, 754, "Laboratory"],
  ["SE", 620, 248, "Page"],
  ["SE", 620, 318, "House"],
  ["SE", 1015, 184, "Venerable"],
  ["SE", 1015, 252, "House"],
  ["SE", 723, 648, "Fleming"],
  ["SE", 723, 717, "House"],
  ["SE", 1032, 648, "Ricketts"],
  ["SE", 1032, 717, "House"],
  ["SE", 688, 849, "Dabney"],
  ["SE", 688, 918, "House"],
  ["SE", 956, 849, "Blacker"],
  ["SE", 956, 918, "House"],
];

const STREET_LABELS: Label[] = [
  ["NW", 493, 724, "Broad Walk"],
  ["NE", 380, 733, "Moore Walk"],
  ["E", 1222, 991, "San Pasqual Street"],
  ["SE", 757, 458, "Olive Walk"],
];

const HOUSE_NUMBERS: Label[] = [
  ["NE", 1355, 303, "299"],
  ["NE", 1395, 379, "305"],
  ["NE", 1393, 488, "315"],
  ["NE", 1412, 783, "345"],
  ["NE", 1410, 923, "363"],
  ["E", 1370, 111, "383"],
  ["E", 1340, 424, "415"],
  ["E", 1028, 564, "414"],
];

const GROUND_LABELS: Label[] = [
  ["W", 253, 142, "Beckman"],
  ["W", 253, 205, "Lawn"],
  ["W", 273, 496, "Resnick"],
  ["W", 273, 559, "Sustainability"],
  ["W", 273, 622, "Center"],
];

const MALL_LABELS: Label[] = [
  ["W", 1150, 572, "Beckman"],
  ["W", 1150, 634, "Mall"],
];

const CAMPUS_LABELS: Label[] = [
  ["SW", 1268, 330, "California"],
  ["SW", 1268, 424, "Institute"],
  ["SW", 1268, 520, "of Technology"],
];

const BLUE_LABELS: Label[] = [
  ["NW", 185, 332, "Wilson"],
  ["NE", 263, 298, "Chester"],
  ["SE", 1371, 861, "Athenaeum"],
  ["SE", 1371, 923, "Parking"],
  ["SE", 1371, 986, "Lot"],
  ["SE", 1535, 106, "Moore"],
];

const PARKING_SIGNS: Label[] = [
  ["NW", 1157, 383, "P"],
  ["NW", 809, 537, "P"],
  ["NW", 1124, 816, "P"],
  ["NE", 1068, 516, "P"],
  ["E", 1063, 131, "P"],
  ["E", 1150, 556, "P"],
  ["SE", 1368, 793, "P"],
];

const MARKERS: [SheetId, number, number][] = [
  ["NW", 602, 884],
  ["SE", 678, 58],
  ["SE", 373, 214],
  ["SE", 373, 624],
];

const MapPane = styled.section`
  position: relative;
  overflow: hidden;
  background: #ffffe5;
`;

const MapSvg = styled.svg`
  display: block;
  width: 100%;
  height: 100%;
`;

const MapText = styled.text<{ $size: number; $color: string; $italic?: boolean; $weight?: number }>`
  font-family: "Noto Sans", "Open Sans", sans-serif;
  font-size: ${(p) => p.$size}px;
  font-style: ${(p) => (p.$italic ? "italic" : "normal")};
  font-weight: ${(p) => p.$weight ?? 400};
  fill: ${(p) => p.$color};
  stroke: rgba(255, 255, 255, 0.6);
  stroke-width: 3px;
  stroke-linejoin: round;
  paint-order: stroke;
  text-anchor: middle;
`;

const ZoomBar = styled.div`
  position: absolute;
  top: 17px;
  left: 17px;
  display: flex;
  flex-direction: column;
  border: 4px solid rgba(0, 0, 0, 0.2);
  border-radius: 7px;
  background: #fff;
  background-clip: padding-box;
`;

const ZoomButton = styled.button`
  display: flex;
  align-items: center;
  justify-content: center;
  width: 52px;
  height: 52px;
  padding: 0;
  border: 0;
  background: none;
  color: #000;
  & + & {
    height: 53px;
    border-top: 1px solid #ccc;
  }
`;

function Polygons({ items, fill, stroke = "none" }: { items: Shape[]; fill: string; stroke?: string }) {
  return (
    <g fill={fill} stroke={stroke} strokeWidth={1}>
      {items.map(([sheet, coords]) => (
        <polygon key={sheet + coords} points={project(sheet, coords)} />
      ))}
    </g>
  );
}

function Polylines({ items, ...rest }: { items: Shape[] } & React.SVGProps<SVGGElement>) {
  return (
    <g fill="none" {...rest}>
      {items.map(([sheet, coords]) => (
        <polyline key={sheet + coords} points={project(sheet, coords)} />
      ))}
    </g>
  );
}

function Labels(props: { items: Label[]; size: number; color: string; italic?: boolean; weight?: number }) {
  return (
    <>
      {props.items.map(([sheet, x, y, text]) => {
        const [px, py] = at(sheet, x, y);
        return (
          <MapText
            key={`${sheet}${x}${y}`}
            x={px}
            y={py + props.size * 0.36}
            $size={props.size}
            $color={props.color}
            $italic={props.italic}
            $weight={props.weight}
          >
            {text}
          </MapText>
        );
      })}
    </>
  );
}

function Dots({ items, color, radius, opacity = 1 }: { items: [SheetId, number, number][]; color: string; radius: number; opacity?: number }) {
  return (
    <g fill={color} stroke="none" opacity={opacity}>
      {items.map(([sheet, x, y]) => {
        const [cx, cy] = at(sheet, x, y);
        return <circle key={`${sheet}${x}${y}`} cx={cx} cy={cy} r={radius} />;
      })}
    </g>
  );
}

function CampusMap() {
  return (
    <MapSvg viewBox="0 0 1056 935" preserveAspectRatio="xMidYMid slice" role="img" aria-label="CalTech NIUBI">
      <defs>
        <pattern id="shrubs" width="11" height="11" patternUnits="userSpaceOnUse">
          <rect width="11" height="11" fill="#cdebb0" />
          <circle cx="5" cy="5" r="1" fill="#86b575" />
        </pattern>
        <path id="pasqual-walk" d="M408 602Q478 598 520 584T580 556" />
      </defs>
      <rect width="1056" height="935" fill="#ffffe5" />
      <Polygons items={[["NE", "1230,548 1510,545 1510,712 1225,712"]]} fill="#f2efe9" stroke="#fdf77f" />
      <Polygons items={[["SE", "1230,2 1510,2 1510,208 1230,208"]]} fill="#dffce2" stroke="#b0eec0" />
      <Polygons items={PITCHES} fill="#88e0be" stroke="#6dc9a3" />
      <Polygons items={BARE_GROUND} fill="#c7c7b4" />
      <Polygons items={PARKING} fill="#eeeeee" stroke="#d6cfc8" />
      <Polygons items={LAWNS} fill="#cdebb0" />
      <Polygons items={GARDENS} fill="url(#shrubs)" />
      <Polygons items={WATER} fill="#aad3df" />
      <Polygons items={BUILDINGS} fill="#d9d0c9" stroke="#c4b6ab" />
      <Polygons items={COURTS} fill="#ffffe5" stroke="#c4b6ab" />
      <circle cx="389" cy="297" r="42" fill="#d9d0c9" stroke="#c4b6ab" />
      <circle cx="587" cy="297" r="8" fill="#aad3df" />
      <circle cx="587" cy="297" r="3" fill="#4d65d8" />
      <circle cx="287" cy="295" r="7" fill="#aad3df" />
      <circle cx="287" cy="295" r="3" fill="#4d65d8" />
      <circle cx="198" cy="295" r="4" fill="#aad3df" stroke="#fff" strokeWidth="2" />

      {/* road casings first, then the carriageways, so that junctions stay open */}
      <g fill="none" stroke="#c3c3c0" strokeLinecap="round" strokeLinejoin="round">
        {ROADS.map(([sheet, coords, width]) => (
          <polyline key={sheet + coords} points={project(sheet, coords)} strokeWidth={width + 2} />
        ))}
      </g>
      <circle cx="828" cy="127" r="17" fill="#fff" stroke="#c3c3c0" />
      <polyline points="1,0 2,580" stroke="#bdbdbd" strokeWidth="2" fill="none" />
      <Polygons
        items={[["SW", "50,250 80,245 115,310 138,400 143,500 135,580 118,650 100,720 85,780 85,1020 50,1020"]]}
        fill="#fff"
        stroke="#b5b5b5"
      />
      <Polygons items={[["SW", "85,1020 3200,1030 3200,1100 50,1100 50,1020"]]} fill="#fff" stroke="#a5a5a5" />
      <g fill="none" stroke="#fff" strokeLinecap="round" strokeLinejoin="round">
        {ROADS.map(([sheet, coords, width]) => (
          <polyline key={sheet + coords} points={project(sheet, coords)} strokeWidth={width} />
        ))}
      </g>
      <Polylines
        items={[
          ["W", "403,380 403,20"],
          ["W", "370,0 75,-8"],
          ["SE", "775,1000 775,940"],
          ["SE", "785,922 850,922"],
        ]}
        stroke="#e9e6e0"
        strokeWidth={5}
        strokeDasharray="20 12"
      />

      <Polylines items={TUNNELS} stroke="#a3a3a3" strokeWidth={2} strokeDasharray="7 4" />
      <Polylines items={RED_PATHS} stroke="#fff" strokeOpacity={0.45} strokeWidth={4} />
      <Polylines items={RED_PATHS} stroke="#fb8578" strokeWidth={2} strokeDasharray="6 4" />
      <circle cx="389" cy="297" r="43" fill="none" stroke="#fb8578" strokeWidth="2" strokeDasharray="6 4" />
      <Polylines items={RAMPS} stroke="#fb8578" strokeWidth={6} strokeDasharray="2 2" />
      <Polylines items={BLUE_PATHS} stroke="#4444f8" strokeWidth={2} strokeDasharray="6 4" />
      <Polylines items={[["SW", "325,850 435,860 437,910"]]} stroke="#8d8d8d" strokeWidth={7} />
      <Polylines items={[["SW", "325,850 435,860 437,912"]]} stroke="#fff" strokeWidth={5} />
      <Polylines items={[["SW", "325,850 435,860 437,950"]]} stroke="#fb8578" strokeWidth={2} strokeDasharray="6 4" />
      <Dots
        items={[
          ["NW", 414, 976],
          ["NW", 1284, 695],
          ["NE", 817, 685],
          ["NE", 35, 998],
          ["SW", 187, 492],
        ]}
        color="#6f6f6f"
        radius={3}
      />
      <Dots
        items={[
          ["SW", 1271, 383],
          ["SW", 1330, 388],
          ["SW", 1264, 585],
          ["SW", 1348, 593],
        ]}
        color="#a9d38f"
        radius={5}
      />

      {/* monument, library, gates and a shop */}
      <g stroke="#734a08" fill="none" strokeWidth="2">
        <path d="M441 542h10M442 545h8M439 566h14" strokeWidth="3" />
        <path d="M444 545l5 5-5 5 5 5-5 4M449 545l-5 5 5 5-5 5 5 4" />
      </g>
      <g fill="#734a08">
        <path d="M500 651q7-1 12 4v14q-5-4-12-4zM524 651q-7-1-12 4v14q5-4 12-4z" stroke="#fffbe5" strokeWidth="1" />
        <path d="M500 667q8-1 12 4 4-5 12-4v2q-8-1-12 4-4-5-12-4z" />
      </g>
      <g stroke="#3b3b3b" strokeWidth="2">
        <path d="M471 657h11M471 661h11M480 653l-6 11" />
        <path d="M791 922h11M791 925h11M800 917l-6 13" />
        <path d="M824 920h11M824 923h11M833 915l-6 13" />
      </g>
      <Dots items={[["SE", 396, 349]]} color="#ac39ac" radius={3} />

      <Labels items={GROUND_LABELS} size={18} color="#5f5f50" italic />
      <Labels items={MALL_LABELS} size={18} color="#5f9440" italic />
      <Labels items={HOUSE_NUMBERS} size={17} color="#7d756f" />
      <Labels items={PLACE_LABELS} size={19} color="#55555a" />
      <Labels items={STREET_LABELS} size={19} color="#333" />
      <Labels items={CAMPUS_LABELS} size={26} color="#66661e" italic />
      <Labels items={[["W", 866, 215, "Gene Pool"]]} size={18} color="#5c76de" />
      <Labels items={BLUE_LABELS} size={18} color="#2a7de8" />
      <Labels items={PARKING_SIGNS} size={28} color="#0092da" weight={600} />
      <MapText $size={19} $color="#333" transform="translate(821 207) rotate(89)">
        South Holliston Avenue
      </MapText>
      <MapText $size={19} $color="#333" transform="translate(18 758) rotate(-84)">
        Wilson Avenue
      </MapText>
      <MapText $size={19} $color="#333" transform="translate(132 739) rotate(-3)">
        Bechtel Mall
      </MapText>
      <MapText $size={19} $color="#333" transform="translate(679 865) rotate(88)">
        Orange Walk
      </MapText>
      <MapText $size={19} $color="#333">
        <textPath href="#pasqual-walk" startOffset="50%">
          San Pasqual Walk
        </textPath>
      </MapText>

      {/* planned route, coloured from red through orange to yellow */}
      <g fill="none" strokeWidth="10" strokeLinecap="round" strokeLinejoin="round">
        <Polylines items={[["E", "310,1022 465,955 488,955 548,967 645,985 748,977"]]} stroke="#fb5f64" />
        <Polylines
          items={[["E", "330,1015 465,956 488,956 548,967 645,985 735,977"]]}
          stroke="#c63d68"
          strokeWidth={1}
          strokeDasharray="6 4"
        />
        <Dots items={[["E", 488, 957], ["E", 548, 967], ["E", 748, 977]]} color="#fb4449" radius={5} />
        <Polylines items={[["SE", "310,-28 330,-10 445,80 460,125 465,215 455,278"]]} stroke="#f4874f" />
        <Polylines items={[["SE", "455,278 455,380 380,388 325,443 301,447 301,500 282,570"]]} stroke="#f8a440" />
        <Polylines
          items={[["SE", "310,-28 330,-10 445,80 460,125 465,215 455,278 455,380 380,388 325,443 301,447 301,500 282,570"]]}
          stroke="#d97741"
          strokeWidth={1}
          strokeDasharray="6 4"
        />
        <Polylines items={[["SE", "405,278 455,278"]]} stroke="#f89624" />
        <Dots items={[["SE", 455, 380], ["SE", 301, 447], ["SE", 301, 500]]} color="#f79420" radius={5} />
        <Dots items={[["SE", 445, 80], ["SE", 460, 125]]} color="#f2713a" radius={5} />
        <Polylines items={[["NW", "683,984 775,988 790,998 912,998 978,937 985,947 1155,947 1155,1062"]]} stroke="#f36f30" />
        <Polylines items={[["W", "1155,43 1195,48 1245,80 1268,110 1275,165"]]} stroke="#f36f30" />
        <Polylines
          items={[["E", "-110,178 -113,178 0,285 60,355 105,380 111,500 113,640 92,685 92,795 115,845 127,898 160,905 215,955 295,1020 310,1022"]]}
          stroke="#f36f30"
        />
      </g>
      <g strokeLinecap="round" stroke="#fff">
        <path d="M434 297h20" strokeWidth="22" />
        <path d="M434 297h20" strokeWidth="17" stroke="#111" />
        <path d="M433 298h22" strokeWidth="4" stroke="#f36f30" />
      </g>
      <circle cx="456" cy="298" r="6" fill="#c9602c" />
      <path d="M458 298h20" stroke="#f36f30" strokeWidth="10" strokeLinecap="round" />

      {MARKERS.map(([sheet, x, y]) => {
        const [cx, cy] = at(sheet, x, y);
        return (
          <circle key={`${x}${y}`} cx={cx} cy={cy} r="11" fill="#3388ff" fillOpacity="0.5" stroke="#3388ff" strokeWidth="3" />
        );
      })}
      <Dots items={[["NW", 619, 862], ["SE", 697, 49], ["SE", 374, 215]]} color="#6b7580" radius={3} />
    </MapSvg>
  );
}

/* ---------- application ---------- */

const TOP_ITEMS: { icon: IconName; label: string }[] = [
  { icon: "promotion", label: "新建计划" },
  { icon: "share", label: "游学社区" },
];

const CENTER_ITEMS: { icon: IconName; label: string; active?: boolean }[] = [
  { icon: "reading", label: "我的日记" },
  { icon: "promotion", label: "我的计划", active: true },
  { icon: "user", label: "基本资料" },
  { icon: "crop", label: "更换头像" },
  { icon: "editPen", label: "重置密码" },
];

const STATS = [
  { label: "路线长度", value: "788m" },
  { label: "路线耗时", value: "17min37s" },
  { label: "交通工具", value: "步行" },
  { label: "策略", value: "时间优先" },
];

export default function App() {
  const [open, setOpen] = useState(true);

  return (
    <>
      <GlobalStyle />
      <Shell>
        <Sidebar>
          <LogoBar>
            <Logo>stuTravel</Logo>
          </LogoBar>
          <nav>
            <MenuList>
              {TOP_ITEMS.map((item) => (
                <li key={item.label}>
                  <MenuLink href="#">
                    <Icon name={item.icon} />
                    <MenuText>{item.label}</MenuText>
                  </MenuLink>
                </li>
              ))}
              <li>
                <MenuToggle type="button" aria-expanded={open} onClick={() => setOpen(!open)}>
                  <Icon name="userFilled" />
                  <MenuText>个人中心</MenuText>
                  <Flip $open={open}>
                    <Icon name="arrowUp" size={21} />
                  </Flip>
                </MenuToggle>
                {open && (
                  <MenuList $nested>
                    {CENTER_ITEMS.map((item) => (
                      <li key={item.label}>
                        <MenuLink href="#" $sub $active={item.active}>
                          <Icon name={item.icon} />
                          <MenuText>{item.label}</MenuText>
                        </MenuLink>
                      </li>
                    ))}
                  </MenuList>
                )}
              </li>
            </MenuList>
          </nav>
        </Sidebar>

        <Main>
          <Header>
            <p>
              游学用户：<strong>气吹盖儿丢了</strong>
            </p>
            <UserMenu type="button" aria-label="气吹盖儿丢了">
              <Avatar />
              <Caret />
            </UserMenu>
          </Header>

          <Workspace>
            <ScrollArea>
              <CardStack>
                <Card>
                  <CardHeader $tall>
                    <PlanTitle>CalTech NIUBI</PlanTitle>
                    <EditButton type="button">
                      编辑计划
                      <Icon name="edit" size={26} />
                    </EditButton>
                  </CardHeader>
                  <CardBody />
                </Card>

                <Card>
                  <CardBody>
                    <Stats>
                      {STATS.map((stat) => (
                        <Stat key={stat.label}>
                          <StatLabel>{stat.label}</StatLabel>
                          <StatValue as="dd">{stat.value}</StatValue>
                        </Stat>
                      ))}
                    </Stats>
                  </CardBody>
                </Card>

                <Card>
                  <CardHeader>浏览顺序</CardHeader>
                  <CardBody>
                    <Stop $flat>
                      <p>类型：餐厅</p>
                      <p>Browne Café</p>
                    </Stop>
                  </CardBody>
                </Card>
              </CardStack>
              <Thumb />
            </ScrollArea>

            <MapPane>
              <CampusMap />
              <ZoomBar>
                <ZoomButton type="button" aria-label="Zoom in">
                  <svg width="21" height="21" viewBox="0 0 21 21" stroke="currentColor" strokeWidth="3">
                    <path d="M0 10.5h21M10.5 0v21" />
                  </svg>
                </ZoomButton>
                <ZoomButton type="button" aria-label="Zoom out">
                  <svg width="21" height="21" viewBox="0 0 21 21" stroke="currentColor" strokeWidth="3">
                    <path d="M0 10.5h21" />
                  </svg>
                </ZoomButton>
              </ZoomBar>
            </MapPane>
          </Workspace>

          <Footer>stuTravel ©2023 Created by 28组</Footer>
        </Main>
      </Shell>
    </>
  );
}
